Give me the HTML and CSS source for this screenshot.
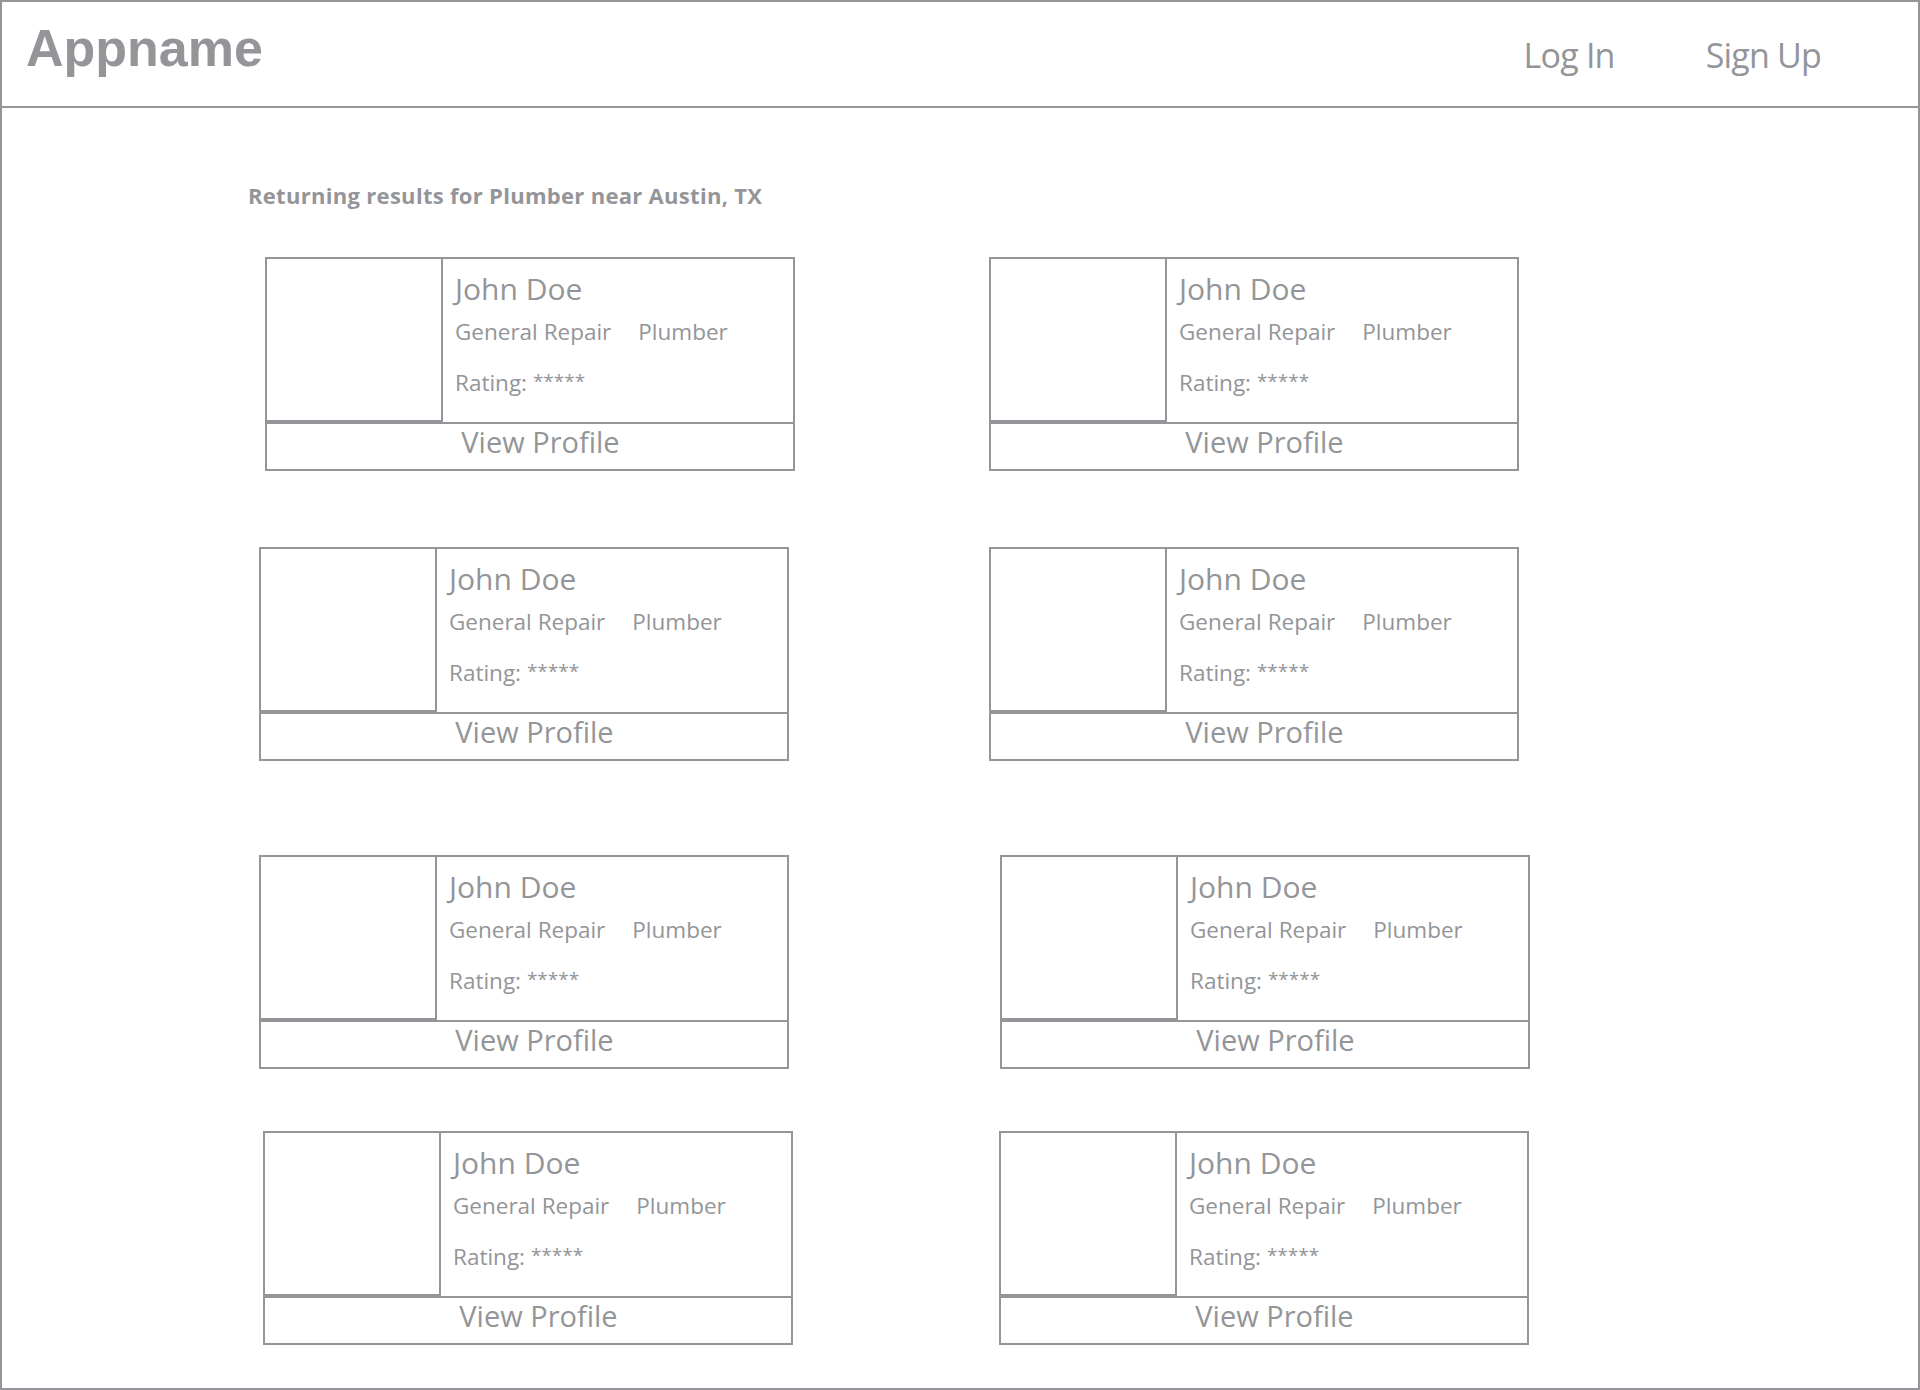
FILE: index.html
```html
<!DOCTYPE html>
<html lang="en">
<head>
<meta charset="utf-8">
<title>Appname - Results</title>
<link rel="stylesheet" href="styles.css">
</head>
<body>
<div class="frame">
  <header class="header">
    <div class="logo">Appname</div>
    <nav class="nav">
      <a class="nav-link" href="#">Log In</a>
      <a class="nav-link" href="#">Sign Up</a>
    </nav>
  </header>
  <main class="main">
    <h1 class="query">Returning results for Plumber near Austin, TX</h1>
    <div class="results">
      <div class="row row-1">
        <div class="card">
          <div class="card-top"><div class="photo"></div><div class="info"><div class="name">John Doe</div><div class="tags"><span>General Repair</span><span>Plumber</span></div><div class="rating">Rating: <span class="stars">*****</span></div></div></div>
          <div class="view">View Profile</div>
        </div>
        <div class="card">
          <div class="card-top"><div class="photo"></div><div class="info"><div class="name">John Doe</div><div class="tags"><span>General Repair</span><span>Plumber</span></div><div class="rating">Rating: <span class="stars">*****</span></div></div></div>
          <div class="view">View Profile</div>
        </div>
      </div>
      <div class="row row-2">
        <div class="card">
          <div class="card-top"><div class="photo"></div><div class="info"><div class="name">John Doe</div><div class="tags"><span>General Repair</span><span>Plumber</span></div><div class="rating">Rating: <span class="stars">*****</span></div></div></div>
          <div class="view">View Profile</div>
        </div>
        <div class="card">
          <div class="card-top"><div class="photo"></div><div class="info"><div class="name">John Doe</div><div class="tags"><span>General Repair</span><span>Plumber</span></div><div class="rating">Rating: <span class="stars">*****</span></div></div></div>
          <div class="view">View Profile</div>
        </div>
      </div>
      <div class="row row-3">
        <div class="card">
          <div class="card-top"><div class="photo"></div><div class="info"><div class="name">John Doe</div><div class="tags"><span>General Repair</span><span>Plumber</span></div><div class="rating">Rating: <span class="stars">*****</span></div></div></div>
          <div class="view">View Profile</div>
        </div>
        <div class="card">
          <div class="card-top"><div class="photo"></div><div class="info"><div class="name">John Doe</div><div class="tags"><span>General Repair</span><span>Plumber</span></div><div class="rating">Rating: <span class="stars">*****</span></div></div></div>
          <div class="view">View Profile</div>
        </div>
      </div>
      <div class="row row-4">
        <div class="card">
          <div class="card-top"><div class="photo"></div><div class="info"><div class="name">John Doe</div><div class="tags"><span>General Repair</span><span>Plumber</span></div><div class="rating">Rating: <span class="stars">*****</span></div></div></div>
          <div class="view">View Profile</div>
        </div>
        <div class="card">
          <div class="card-top"><div class="photo"></div><div class="info"><div class="name">John Doe</div><div class="tags"><span>General Repair</span><span>Plumber</span></div><div class="rating">Rating: <span class="stars">*****</span></div></div></div>
          <div class="view">View Profile</div>
        </div>
      </div>
    </div>
  </main>
</div>
</body>
</html>
```
FILE: styles.css
```css
* { box-sizing: border-box; }
html, body { margin: 0; padding: 0; background: #ffffff; }
body { font-family: "Open Sans", "Noto Sans", sans-serif; color: #939598; }

.frame {
  width: 1920px;
  height: 1390px;
  border: 2px solid #939598;
  overflow: hidden;
}

.header {
  height: 104px;
  box-sizing: content-box;
  border-bottom: 2px solid #939598;
  display: flex;
  align-items: flex-start;
  justify-content: space-between;
}

.logo {
  font-family: "Liberation Sans", Arial, sans-serif;
  font-weight: 700;
  font-size: 52px;
  line-height: 60px;
  margin-top: 16px;
  padding-left: 24px;
  color: #939598;
}

.nav {
  display: flex;
  gap: 91px;
  margin-top: 31px;
  padding-right: 97px;
}

.nav-link {
  font-size: 34px;
  line-height: 44px;
  letter-spacing: -0.8px;
  color: #939598;
  text-decoration: none;
}

.main { padding-top: 73px; }

.query {
  margin: 0;
  padding-left: 246px;
  font-size: 22px;
  line-height: 28px;
  font-weight: 700;
  letter-spacing: 0.3px;
  color: #939598;
}

.results { display: flex; flex-direction: column; }

.row { display: flex; }
.row-1 { margin-top: 48px; padding-left: 263px; gap: 194px; }
.row-2 { margin-top: 76px; padding-left: 257px; gap: 200px; }
.row-3 { margin-top: 94px; padding-left: 257px; gap: 211px; }
.row-4 { margin-top: 62px; padding-left: 261px; gap: 206px; }

.card {
  width: 530px;
  height: 214px;
  border: 2px solid #939598;
  display: flex;
  flex-direction: column;
}

.card-top {
  height: 165px;
  border-bottom: 2px solid #939598;
  display: flex;
}

.photo {
  width: 176px;
  flex: none;
  border-right: 2px solid #939598;
  border-bottom: 2px solid #939598;
}

.info { padding: 10px 0 0 12px; }

.name {
  font-size: 30px;
  line-height: 40px;
  margin-bottom: 8px;
}

.tags {
  display: flex;
  gap: 27px;
  font-size: 22.5px;
  line-height: 30px;
  margin-bottom: 19px;
}

.rating {
  font-size: 22.5px;
  line-height: 30px;
}

.stars {
  font-size: 19px;
  vertical-align: 3px;
}

.view {
  height: 45px;
  font-size: 29px;
  line-height: 36px;
  text-align: center;
  padding-left: 21px;
}
```
